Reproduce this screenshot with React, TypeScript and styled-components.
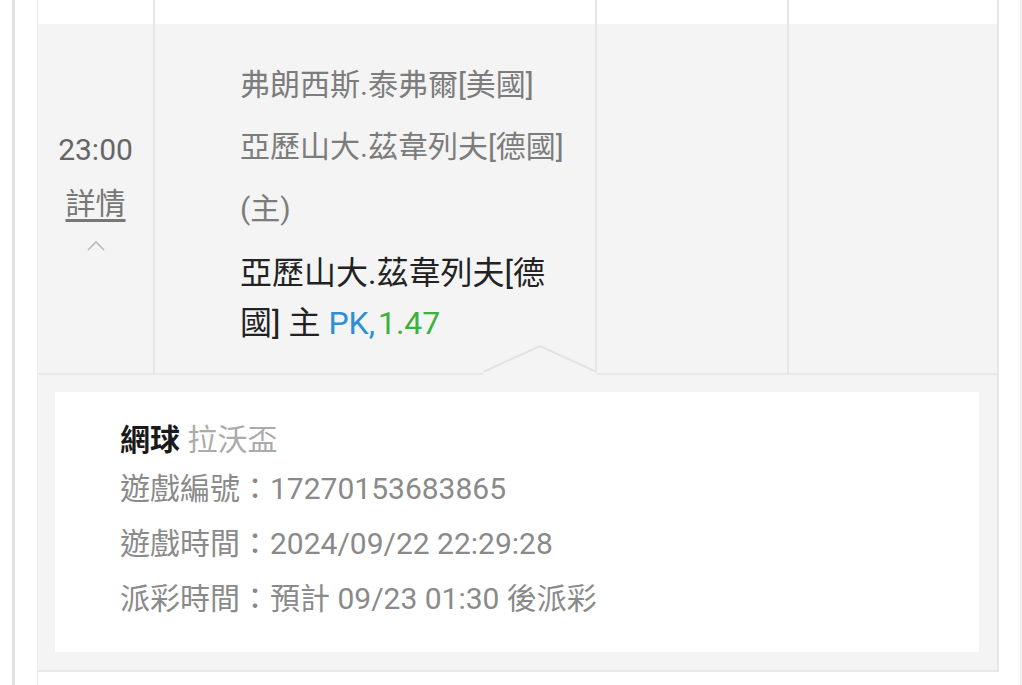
import React from 'react';
import styled, { createGlobalStyle } from 'styled-components';

const GlobalStyle = createGlobalStyle`
	html, body {
		margin: 0;
		padding: 0;
		background: #ffffff;
	}
	body {
		font-family: Roboto, "Noto Sans CJK TC", sans-serif;
		color: #777777;
	}
`

type infoLineType = {
	label: string;
	value: string;
}

const infoLines: Array<infoLineType> = [
	{ label: '遊戲編號：', value: '17270153683865' },
	{ label: '遊戲時間：', value: '2024/09/22 22:29:28' },
	{ label: '派彩時間：', value: '預計 09/23 01:30 後派彩' },
];

const ChevronUp = () => (
	<svg width="22" height="14" viewBox="0 0 22 14">
		<polyline points="3,12 11,4 19,12" fill="none" stroke="#b8b8b8" strokeWidth="1.6" />
	</svg>
);

const Notch = () => (
	<StyledNotch width="114" height="30" viewBox="0 0 114 30">
		<polygon points="0,30 0,27 57,1 114,27 114,30" fill="#f4f4f4" />
		<polyline points="0,27 57,1 114,27" fill="none" stroke="#e3e3e3" strokeWidth="2" />
	</StyledNotch>
);

export default function App() {
	return (
		<>
			<GlobalStyle />
			<StyledFrame>
				<StyledTable>
					<StyledCell $top />
					<StyledCell $top />
					<StyledCell $top />
					<StyledCell $top />

					<StyledTimeCell>
						<StyledTime>23:00</StyledTime>
						<StyledDetailLink>詳情</StyledDetailLink>
						<ChevronUp />
					</StyledTimeCell>
					<StyledBetCell>
						<StyledGrayLine>弗朗西斯.泰弗爾[美國]</StyledGrayLine>
						<StyledGrayLine>亞歷山大.茲韋列夫[德國]</StyledGrayLine>
						<StyledGrayLine>(主)</StyledGrayLine>
						<StyledPick>
							亞歷山大.茲韋列夫[德國] 主 <StyledPlay>PK,</StyledPlay><StyledOdds>1.47</StyledOdds>
						</StyledPick>
					</StyledBetCell>
					<StyledCell />
					<StyledCell />

					<StyledDetailPanel>
						<Notch />
						<StyledDetailBox>
							<StyledDetailTitle>
								<b>網球</b> <span>拉沃盃</span>
							</StyledDetailTitle>
							{infoLines.map((line) => (
								<StyledInfoLine key={line.label}>
									{line.label}{line.value}
								</StyledInfoLine>
							))}
						</StyledDetailBox>
					</StyledDetailPanel>

					<StyledSpacer />
				</StyledTable>
			</StyledFrame>
		</>
	);
}

const StyledFrame = styled.div`
	box-sizing: border-box;
	width: 1010px;
	height: 685px;
	overflow: hidden;
	margin-left: 12px;
	border-left: 3px solid #e2e2e2;
	border-right: 2px solid #efefef;
	padding: 0 20px 0 22px;
`

const StyledTable = styled.div`
	display: grid;
	grid-template-columns: 117px 442px 192px 210px;
	border-left: 1px solid #ececec;
`

const StyledCell = styled.div<{ $top?: boolean }>`
	box-sizing: border-box;
	height: ${props => props.$top ? '24px' : 'auto'};
	background-color: ${props => props.$top ? '#ffffff' : '#f4f4f4'};
	border-right: 2px solid #e6e6e6;
	border-bottom: ${props => props.$top ? 'none' : '2px solid #e8e8e8'};
`

const StyledTimeCell = styled(StyledCell)`
	display: flex;
	flex-direction: column;
	align-items: center;
	padding-top: 100px;
`

const StyledTime = styled.div`
	font-size: 30px;
	line-height: 52px;
	color: #666666;
`

const StyledDetailLink = styled.a`
	font-size: 30px;
	line-height: 56px;
	color: #777777;
	text-decoration: underline;
	text-underline-offset: 5px;
	margin-bottom: 6px;
`

const StyledBetCell = styled(StyledCell)`
	padding: 30px 0 25px 85px;
	font-size: 30px;
`

const StyledGrayLine = styled.div`
	line-height: 62px;
	color: #7c7c7c;
	white-space: nowrap;
`

const StyledPick = styled.div`
	margin-top: 8px;
	max-width: 322px;
	font-size: 32px;
	line-height: 50px;
	color: #222222;
`

const StyledPlay = styled.span`
	color: #2b8fd4;
`

const StyledOdds = styled.span`
	color: #3bb23b;
	margin-left: 3px;
`

const StyledDetailPanel = styled.div`
	grid-column: 1 / -1;
	position: relative;
	background-color: #f4f4f4;
	border-right: 2px solid #e6e6e6;
	border-bottom: 2px solid #e8e8e8;
	padding: 17px 18px 18px 17px;
`

const StyledNotch = styled.svg`
	position: absolute;
	top: -30px;
	left: 445px;
`

const StyledDetailBox = styled.div`
	background-color: #ffffff;
	padding: 27px 0 26px 65px;
	font-size: 30px;
`

const StyledDetailTitle = styled.div`
	line-height: 42px;

	& b {
		color: #1a1a1a;
		font-weight: 700;
	}

	& span {
		color: #ababab;
	}
`

const StyledInfoLine = styled.div`
	line-height: 55px;
	color: #8a8a8a;
`

const StyledSpacer = styled.div`
	grid-column: 1 / -1;
	height: 40px;
	background-color: #ffffff;
`
